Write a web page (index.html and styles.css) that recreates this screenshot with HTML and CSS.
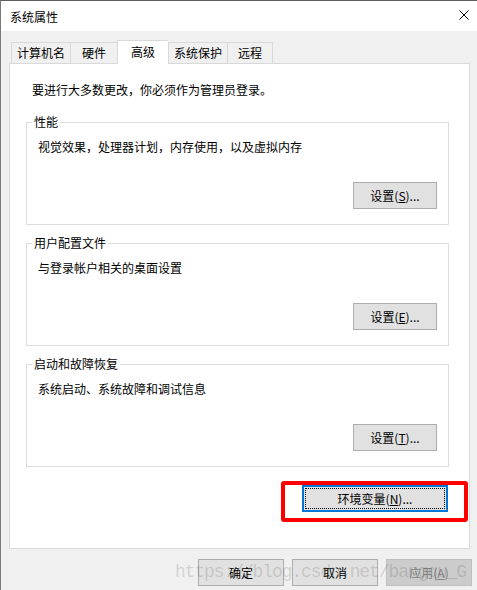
FILE: index.html
```html
<!DOCTYPE html>
<html lang="zh-CN">
<head>
<meta charset="utf-8">
<title>系统属性</title>
<link rel="stylesheet" href="styles.css">
</head>
<body>
<div class="window">
  <div class="titlebar">
    <span class="title">系统属性</span>
    <svg class="close" width="10" height="10" viewBox="0 0 10 10" aria-label="关闭"><path d="M0.5 0.5L9.5 9.5M9.5 0.5L0.5 9.5" stroke="#000" stroke-width="1" fill="none"/></svg>
  </div>
  <div class="content">
    <div class="tabs">
      <div class="tab">计算机名</div>
      <div class="tab">硬件</div>
      <div class="tab active">高级</div>
      <div class="tab">系统保护</div>
      <div class="tab last">远程</div>
    </div>
    <div class="panel">
      <p class="notice">要进行大多数更改，你必须作为管理员登录。</p>
      <div class="group">
        <div class="group-title">性能</div>
        <p class="group-desc">视觉效果，处理器计划，内存使用，以及虚拟内存</p>
        <div class="group-actions"><button class="btn">设置(<u>S</u>)...</button></div>
      </div>
      <div class="group">
        <div class="group-title">用户配置文件</div>
        <p class="group-desc">与登录帐户相关的桌面设置</p>
        <div class="group-actions"><button class="btn">设置(<u>E</u>)...</button></div>
      </div>
      <div class="group">
        <div class="group-title">启动和故障恢复</div>
        <p class="group-desc">系统启动、系统故障和调试信息</p>
        <div class="group-actions"><button class="btn">设置(<u>T</u>)...</button></div>
      </div>
      <div class="env-row">
        <button class="btn btn-focus">环境变量(<u>N</u>)...</button>
        <span class="highlight"></span>
      </div>
    </div>
    <div class="footer">
      <button class="btn btn-footer">确定</button>
      <button class="btn btn-footer">取消</button>
      <button class="btn btn-footer btn-disabled">应用(<u>A</u>)</button>
    </div>
  </div>
  <div class="watermark">https://blog.csdn.net/bangqu_G</div>
</div>
</body>
</html>
```
FILE: styles.css
```css
html, body {
  margin: 0;
  padding: 0;
  background: #f0f0f0;
}
body {
  font-family: "Noto Sans CJK SC", "Microsoft YaHei", sans-serif;
  font-size: 12px;
  color: #000;
}
.window {
  position: relative;
  width: 477px;
  height: 590px;
  box-sizing: border-box;
  border-top: 1px solid #5c5c5c;
  border-left: 1px solid #7a7a7a;
  background: #f0f0f0;
  overflow: hidden;
}
.titlebar {
  height: 30px;
  background: #fff;
  display: flex;
  align-items: center;
  padding-left: 9px;
}
.title {
  line-height: 16px;
  margin-top: 1px;
}
.close {
  margin-left: auto;
  margin-right: 8px;
  align-self: flex-start;
  margin-top: 9px;
  display: block;
}
.content {
  padding: 9px 7px 0 8px;
}
.tabs {
  display: flex;
  align-items: flex-end;
  margin-left: 2px;
  position: relative;
  z-index: 1;
}
.tab {
  box-sizing: border-box;
  height: 21px;
  line-height: 20px;
  border-top: 1px solid #d9d9d9;
  border-left: 1px solid #d9d9d9;
  background: #f0f0f0;
  padding: 0 5px;
  min-width: 47px;
  text-align: center;
  white-space: nowrap;
}
.tab.last {
  border-right: 1px solid #d9d9d9;
  min-width: 46px;
}
.tab.active {
  height: 24px;
  line-height: 22px;
  background: #fff;
  padding: 0;
  min-width: 51px;
  margin-bottom: -1px;
}
.panel {
  background: #fff;
  border: 1px solid #d9d9d9;
  padding: 18px 20px 36px 16px;
}
.notice {
  margin: 0;
  padding-left: 6px;
  line-height: 16px;
}
.group {
  border: 1px solid #dcdcdc;
  padding: 0 11px 15px 11px;
  margin-top: 18px;
}
.notice + .group {
  margin-top: 24px;
}
.group-title {
  margin-top: -9px;
  margin-left: -6px;
  width: fit-content;
  padding: 0 2px;
  background: #fff;
  line-height: 16px;
}
.group-desc {
  margin: 9px 0 0 0;
  line-height: 16px;
}
.group-actions {
  display: flex;
  justify-content: flex-end;
  margin-top: 27px;
}
.btn {
  font-family: inherit;
  font-size: 12px;
  color: #000;
  width: 84px;
  height: 27px;
  padding: 0;
  margin: 0;
  background: #e1e1e1;
  border: 1px solid #adadad;
  border-radius: 0;
  line-height: 16px;
  text-align: center;
}
.btn u {
  text-underline-offset: 1px;
}
.env-row {
  position: relative;
  display: flex;
  justify-content: flex-end;
  margin-top: 18px;
  margin-right: 1px;
}
.btn-focus {
  width: 146px;
  border: 2px solid #0078d7;
  outline: 1px dotted #000;
  outline-offset: -4px;
}
.highlight {
  position: absolute;
  right: -20px;
  top: -4px;
  width: 187px;
  height: 41px;
  box-sizing: border-box;
  border: 4px solid #ff0000;
  border-radius: 3px;
}
.footer {
  display: flex;
  justify-content: flex-end;
  gap: 8px;
  margin-top: 10px;
  margin-right: -2px;
}
.btn-footer {
  width: 86px;
}
.btn-disabled {
  background: #cccccc;
  border-color: #bfbfbf;
  color: #838383;
}
.watermark {
  position: absolute;
  left: 174px;
  top: 562px;
  font-family: "Liberation Mono", monospace;
  font-size: 18px;
  line-height: 18px;
  letter-spacing: -1.1px;
  color: rgba(80, 80, 80, 0.2);
  white-space: nowrap;
  pointer-events: none;
}
```
